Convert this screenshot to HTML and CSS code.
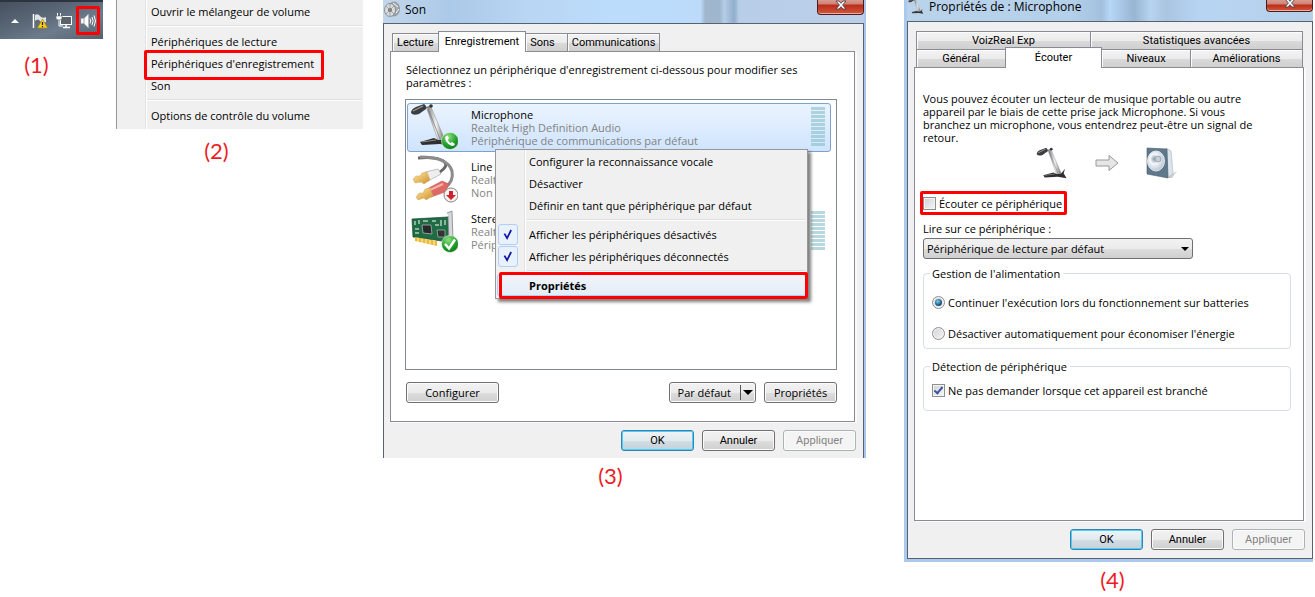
FILE: index.html
```html
<!DOCTYPE html>
<html lang="fr">
<head>
    <meta charset="UTF-8">
    <meta name="viewport" content="width=device-width, initial-scale=1.0">
    <title>Activer l'écoute du microphone</title>
    <link rel="stylesheet" href="styles.css">
</head>
<body>
    <!-- Symboles réutilisés -->
    <svg class="defs" width="0" height="0" aria-hidden="true">
        <defs>
            <linearGradient id="metal" x1="0" x2="1">
                <stop offset="0" stop-color="#777"/>
                <stop offset=".5" stop-color="#f4f4f4"/>
                <stop offset="1" stop-color="#666"/>
            </linearGradient>
            <linearGradient id="gold" x1="0" y1="0" x2="1" y2="1">
                <stop offset="0" stop-color="#f9e7a8"/>
                <stop offset=".5" stop-color="#e8bd62"/>
                <stop offset="1" stop-color="#c98d3c"/>
            </linearGradient>
            <radialGradient id="green" cx=".4" cy=".25" r=".8">
                <stop offset="0" stop-color="#8fe07f"/>
                <stop offset=".6" stop-color="#21a02c"/>
                <stop offset="1" stop-color="#0c7318"/>
            </radialGradient>
            <radialGradient id="cone" cx=".4" cy=".4" r=".7">
                <stop offset="0" stop-color="#8c9aa8"/>
                <stop offset=".35" stop-color="#f5f8fa"/>
                <stop offset="1" stop-color="#aebbc7"/>
            </radialGradient>
        </defs>
        <symbol id="mic" viewBox="0 0 44 44">
            <path d="M17 6 L21 4 L35 37 L28 37 Z" fill="url(#metal)" stroke="#888" stroke-width=".5"/>
            <path d="M19 8 L30 36" stroke="#666" stroke-width=".6"/>
            <path d="M22 3 L12 6" stroke="#777" stroke-width="1.800"/>
            <path d="M1 10 Q1 6 6 4 L14 1 Q17 3 16 6 L9 11 Q3 13 1 10 Z" fill="#3c3d40"/>
            <path d="M3 8 L13 3" stroke="#999" stroke-width="1.300"/>
            <circle cx="21" cy="3" r="1.800" fill="#333"/>
            <path d="M10 39 L24 35 L28 37 H34 L40 30 L38 36 L42 43 L30 41 L12 42 Z" fill="#2e2f31"/>
            <path d="M12 39 L26 37" stroke="#8a8a8a" stroke-width="1" fill="none"/>
        </symbol>
    </svg>

    <section class="step step-tray">
        <div class="tray">
            <svg class="tray-arrow" viewBox="0 0 8 4"><path d="M4 0 L8 4 H0 Z" fill="#fff"/></svg>
            <svg class="tray-icon" viewBox="0 0 16 16">
                <path d="M1.500 1 V15" stroke="#fff" stroke-width="1.500"/>
                <path d="M3 2 Q6 0 8 3 T14 4 V9 Q10 11 8 8 T3 8 Z" fill="#dfe3e6"/>
                <path d="M10.500 6 L15.500 15 H5.500 Z" fill="#f8d020" stroke="#b58a00" stroke-width=".7"/>
                <path d="M10.500 9 V12 M10.500 13 V14.200" stroke="#222" stroke-width="1.300"/>
            </svg>
            <svg class="tray-icon" viewBox="0 0 16 16">
                <rect x="4.500" y="3.500" width="11" height="8" fill="#59636c" stroke="#fff"/>
                <path d="M7 14.500 H14 M10 12 V14" stroke="#fff" stroke-width="1.500"/>
                <path d="M1.500 0 V3 M4.500 0 V3 M3 7 V13 H7" stroke="#fff" fill="none"/>
                <path d="M0 3 H6 V5 Q6 7 3 7 Q0 7 0 5 Z" fill="#fff" stroke="#444" stroke-width=".5"/>
            </svg>
            <button class="tray-volume marked" aria-label="Volume">
                <svg class="tray-icon" viewBox="0 0 16 16">
                    <path d="M1 5.500 H4 L8.500 1 V15 L4 10.500 H1 Z" fill="#fff" stroke="#aaa" stroke-width=".5"/>
                    <path d="M4 5.500 V10.500" stroke="#888" stroke-width=".8"/>
                    <path d="M10 5.500 Q11.500 8 10 10.500 M12 4 Q14.300 8 12 12 M14 2.500 Q17 8 14 13.500" stroke="#fff" fill="none"/>
                </svg>
            </button>
        </div>
        <p class="caption">(1)</p>
    </section>

    <section class="step step-menu">
        <div class="menu tray-menu">
            <button class="menu-item">Ouvrir le mélangeur de volume</button>
            <hr>
            <button class="menu-item">Périphériques de lecture</button>
            <button class="menu-item highlighted">Périphériques d'enregistrement</button>
            <button class="menu-item">Son</button>
            <hr>
            <button class="menu-item">Options de contrôle du volume</button>
        </div>
        <p class="caption">(2)</p>
    </section>

    <section class="step step-sound">
        <div class="window window-sound">
            <header class="title-bar">
                <svg class="title-icon" viewBox="0 0 16 16">
                    <ellipse cx="10" cy="8" rx="5.500" ry="7" fill="#a5a9ac" stroke="#777" stroke-width=".6"/>
                    <ellipse cx="6" cy="9" rx="5.500" ry="6.500" fill="#d9dcde" stroke="#777" stroke-width=".7"/>
                    <circle cx="6" cy="9" r="2" fill="#6d7174"/>
                    <path d="M2 5 L10 13 M10 5 L2 13 M6 3 V15" stroke="#8b8f92" stroke-width=".7"/>
                    <path d="M9 2 L14 6 M12 12 L15 8" stroke="#fff" stroke-width=".9"/>
                </svg>
                <h1>Son</h1>
                <button class="close" aria-label="Fermer">
                    <svg viewBox="0 0 12 10"><path d="M1 1 H4 L6 3.300 L8 1 H11 L7.600 5 L11 9 H8 L6 6.700 L4 9 H1 L4.400 5 Z" fill="#fff" stroke="#46444e" stroke-width=".9"/></svg>
                </button>
            </header>
            <div class="window-body">
                <nav class="tabs">
                    <button class="tab">Lecture</button>
                    <button class="tab active">Enregistrement</button>
                    <button class="tab tab-sons">Sons</button>
                    <button class="tab">Communications</button>
                </nav>
                <div class="panel">
                    <p class="intro">Sélectionnez un périphérique d'enregistrement ci-dessous pour modifier ses paramètres :</p>
                    <div class="device-box">
                        <ul class="devices">
                            <li class="device selected">
                                <svg class="device-icon" viewBox="0 0 50 48">
                                    <use href="#mic" x="2" y="0" width="44" height="44"/>
                                    <circle cx="42" cy="38" r="8.500" fill="url(#green)" stroke="#e8f5e8" stroke-width=".6"/>
                                    <path d="M38 33 Q36.500 34 37.500 37 Q40 42 44.500 43 Q46.500 43 47 41 L44 39 L42.500 40 Q40.500 39 39.800 36.500 L41 35.500 L39.500 32.500 Z" fill="#fff"/>
                                </svg>
                                <div class="device-text">
                                    <strong>Microphone</strong>
                                    <span>Realtek High Definition Audio</span>
                                    <span>Périphérique de communications par défaut</span>
                                </div>
                                <div class="meter"></div>
                            </li>
                            <li class="device">
                                <svg class="device-icon" viewBox="0 0 50 48">
                                    <path d="M10 3 Q36 1 38 10 Q37 14 29 19" fill="none" stroke="#666" stroke-width="3"/>
                                    <path d="M12 2 Q40 2 44 16 Q46 26 37 33" fill="none" stroke="#8c8c8c" stroke-width="3"/>
                                    <path d="M17 17 L30 14 L33 19 L20 26 Z" fill="#eee" stroke="#aaa" stroke-width=".7"/>
                                    <path d="M5 24 L8 21 H12 L14 18 L19 17 L22 25 L16 29 L13 27 L7 28 Z" fill="url(#gold)" stroke="#d0a860" stroke-width=".5"/>
                                    <path d="M19 34 L34 26 L41 29 L37 37 L23 42 Z" fill="#dd6a62" stroke="#c55" stroke-width=".6"/>
                                    <path d="M22 35 L35 29" stroke="#f3b4ae" stroke-width="2"/>
                                    <path d="M8 42 L11 38 H15 L17 34 L22 33 L25 41 L18 45 L16 43 L10 45 Z" fill="url(#gold)" stroke="#d0a860" stroke-width=".5"/>
                                    <circle cx="43" cy="40" r="7" fill="#f3f3f3" stroke="#858585"/>
                                    <path d="M41 36 H45 V40 H48 L43 45 L38 40 H41 Z" fill="#d3202a"/>
                                </svg>
                                <div class="device-text">
                                    <strong>Line</strong>
                                    <span>Realt</span>
                                    <span>Non</span>
                                </div>
                            </li>
                            <li class="device">
                                <svg class="device-icon" viewBox="0 0 50 48">
                                    <path d="M4 12 L40 10 L41 35 L5 30 Z" fill="#1f6b45" stroke="#134b30" stroke-width=".7"/>
                                    <path d="M39 6 L44 4 L45 33 L41 36 L40 9" fill="#d5d8da" stroke="#808589" stroke-width=".8"/>
                                    <path d="M7 30 L29 34 V39 L7 34 Z" fill="#e9b93d"/>
                                    <path d="M10 31 V35 M14 32 V36 M18 32 V37 M22 33 V38 M26 33 V38" stroke="#fff1b5"/>
                                    <path d="M14 18 L23 18 L24 27 L15 26 Z" fill="#26282b" stroke="#aab8ad" stroke-width=".8"/>
                                    <path d="M29 23 H37 V30 H30 Z" fill="#333" stroke="#9eb3a3" stroke-width=".8"/>
                                    <path d="M7 14 V18 M11 13 V17 M15 14 H20 M24 14 H28 M27 18 H31 M33 13 V19 M37 13 V18 M7 22 H11 M7 26 H11" stroke="#b5cdb9" stroke-width="1.500"/>
                                    <circle cx="42" cy="37" r="8.500" fill="url(#green)" stroke="#e8f5e8" stroke-width=".6"/>
                                    <path d="M37 37 L41 41.500 L47 32.500" fill="none" stroke="#fff" stroke-width="2.500"/>
                                </svg>
                                <div class="device-text">
                                    <strong>Stere</strong>
                                    <span>Realt</span>
                                    <span>Périp</span>
                                </div>
                                <div class="meter"></div>
                            </li>
                        </ul>
                        <div class="menu context-menu">
                            <button class="menu-item">Configurer la reconnaissance vocale</button>
                            <button class="menu-item">Désactiver</button>
                            <button class="menu-item">Définir en tant que périphérique par défaut</button>
                            <hr>
                            <button class="menu-item"><svg class="tick" viewBox="0 0 20 20"><path d="M6 9 L9 14 L13.500 5" fill="none" stroke="#1119a5" stroke-width="2"/></svg>Afficher les périphériques désactivés</button>
                            <button class="menu-item"><svg class="tick" viewBox="0 0 20 20"><path d="M6 9 L9 14 L13.500 5" fill="none" stroke="#1119a5" stroke-width="2"/></svg>Afficher les périphériques déconnectés</button>
                            <hr>
                            <button class="menu-item highlighted default">Propriétés</button>
                        </div>
                    </div>
                    <div class="panel-actions">
                        <button class="btn btn-wide">Configurer</button>
                        <button class="btn btn-split">Par défaut<span class="split"></span></button>
                        <button class="btn">Propriétés</button>
                    </div>
                </div>
                <div class="dialog-actions">
                    <button class="btn primary">OK</button>
                    <button class="btn">Annuler</button>
                    <button class="btn" disabled>Appliquer</button>
                </div>
            </div>
        </div>
        <p class="caption">(3)</p>
    </section>

    <section class="step step-properties">
        <div class="window window-properties">
            <header class="title-bar">
                <svg class="title-icon" viewBox="0 0 44 44"><use href="#mic"/></svg>
                <h1>Propriétés de : Microphone</h1>
                <button class="close" aria-label="Fermer">
                    <svg viewBox="0 0 12 10"><path d="M1 1 H4 L6 3.300 L8 1 H11 L7.600 5 L11 9 H8 L6 6.700 L4 9 H1 L4.400 5 Z" fill="#fff" stroke="#46444e" stroke-width=".9"/></svg>
                </button>
            </header>
            <div class="window-body">
                <nav class="tabs tabs-top">
                    <button class="tab">VoizReal Exp</button>
                    <button class="tab">Statistiques avancées</button>
                </nav>
                <nav class="tabs tabs-bottom">
                    <button class="tab">Général</button>
                    <button class="tab active">Écouter</button>
                    <button class="tab">Niveaux</button>
                    <button class="tab">Améliorations</button>
                </nav>
                <div class="panel">
                    <p class="intro">Vous pouvez écouter un lecteur de musique portable ou autre appareil par le biais de cette prise jack Microphone. Si vous branchez un microphone, vous entendrez peut-être un signal de retour.</p>
                    <div class="flow">
                        <svg class="flow-icon" viewBox="0 0 44 44"><use href="#mic"/></svg>
                        <svg class="flow-arrow" viewBox="0 0 24 18"><path d="M1 6 H14 V1.500 L23 9 L14 16.500 V12 H1 Z" fill="#e6e6e6" stroke="#999"/></svg>
                        <svg class="flow-icon" viewBox="0 0 32 32">
                            <path d="M20 31 L31 24 L26 31 Z" fill="#ccc"/>
                            <path d="M20 1 L25 4 L27 26 L22 31 Z" fill="#dce5ec" stroke="#a6b2bc" stroke-width=".6"/>
                            <path d="M1 1 L21 2 L22 31 L1 27 Z" fill="#60788c" stroke="#485c6d" stroke-width=".6"/>
                            <ellipse cx="10" cy="14" rx="8.500" ry="10" fill="url(#cone)" stroke="#dfe7ed"/>
                            <circle cx="12" cy="12" r="3" fill="#c3ced8" stroke="#7b8c9a" stroke-width=".6"/>
                        </svg>
                    </div>
                    <label class="choice listen marked"><input type="checkbox">Écouter ce périphérique</label>
                    <label class="field-label" for="playback">Lire sur ce périphérique :</label>
                    <div class="select">
                        <select id="playback">
                            <option>Périphérique de lecture par défaut</option>
                        </select>
                    </div>
                    <fieldset class="power">
                        <legend>Gestion de l'alimentation</legend>
                        <label class="choice"><input type="radio" name="power" checked>Continuer l'exécution lors du fonctionnement sur batteries</label>
                        <label class="choice"><input type="radio" name="power">Désactiver automatiquement pour économiser l'énergie</label>
                    </fieldset>
                    <fieldset class="detection">
                        <legend>Détection de périphérique</legend>
                        <label class="choice"><input type="checkbox" checked>Ne pas demander lorsque cet appareil est branché</label>
                    </fieldset>
                </div>
                <div class="dialog-actions">
                    <button class="btn primary">OK</button>
                    <button class="btn">Annuler</button>
                    <button class="btn" disabled>Appliquer</button>
                </div>
            </div>
        </div>
        <p class="caption">(4)</p>
    </section>
</body>
</html>
```
FILE: styles.css
```css
* {
    margin: 0;
    padding: 0;
    box-sizing: border-box;
}

body {
    display: flex;
    align-items: flex-start;
    padding-right: 2px;
    background-color: #fff;
    color: #000;
    font-family: 'Open Sans', 'Noto Sans', sans-serif;
    font-size: 11px;
    line-height: 13px;
}

button,
select {
    font: inherit;
    color: inherit;
}

.defs {
    position: absolute;
}

/* Étapes */
.step {
    min-width: 0;
}

.step-tray {
    flex: 103 1 0;
}

.step-menu {
    flex: 247 1 0;
    margin-left: 13px;
}

.step-sound {
    flex: 483 1 0;
    margin-left: 20px;
}

.step-properties {
    flex: 409 1 0;
    margin-left: 38px;
}

.caption {
    padding-top: 4px;
    color: #ed1c24;
    font-family: Lato, sans-serif;
    font-size: 22px;
    line-height: 28px;
    text-align: center;
}

.step-tray .caption {
    padding-top: 12px;
    padding-right: 30px;
}

.step-menu .caption {
    padding-top: 8px;
    padding-right: 46px;
}

.step-sound .caption {
    padding-right: 28px;
}

.step-properties .caption {
    padding-left: 8px;
}

.marked {
    border: 3px solid #f00;
    border-radius: 2px;
}

/* Zone de notification */
.tray {
    display: flex;
    align-items: center;
    justify-content: flex-end;
    gap: 8px;
    height: 39px;
    padding-right: 3px;
    border-top: 2px solid #2d3440;
    background: linear-gradient(160deg, #46505e 0%, #5d6b7b 45%, #6d7c8c 65%, #56616f 100%);
}

.tray-arrow {
    width: 8px;
    height: 4px;
    margin-right: 5px;
}

.tray-icon {
    display: block;
    width: 16px;
    height: 16px;
}

.tray-volume {
    display: flex;
    align-items: center;
    justify-content: center;
    width: 24px;
    height: 29px;
    margin-left: -4px;
    background: none;
}

/* Menus */
.menu {
    background: linear-gradient(90deg, #f0f0f0 28px, #e2e3e3 28px, #e2e3e3 29px, #fff 29px, #fff 30px, #f0f0f0 30px);
}

.menu hr {
    height: 2px;
    margin: 3px 1px 3px 30px;
    border: 0;
    border-top: 1px solid #e0e0e0;
    border-bottom: 1px solid #fff;
}

.menu-item {
    position: relative;
    display: block;
    width: 100%;
    height: 22px;
    padding-left: 34px;
    border: 0;
    background: none;
    text-align: left;
    white-space: nowrap;
}

.tray-menu {
    padding-bottom: 3px;
    border-left: 1px solid #979797;
}

.tray-menu .highlighted::after {
    content: "";
    position: absolute;
    top: -2px;
    bottom: -6px;
    left: 27px;
    width: 174px;
    border: 3px solid #f00;
    border-radius: 2px;
}

.context-menu {
    position: absolute;
    top: 49px;
    left: 89px;
    width: 313px;
    padding: 0 1px 2px;
    border: 1px solid #979797;
    box-shadow: 3px 3px 3px rgba(0, 0, 0, 0.5);
}

.context-menu hr {
    margin-bottom: 2px;
}

.context-menu .menu-item {
    padding-left: 32px;
}

.context-menu .default {
    border-radius: 3px;
    background: linear-gradient(#f2f5fa, #e3ecf8);
    box-shadow: inset 0 0 0 1px #aecff7;
    font-weight: bold;
}

.context-menu .highlighted::after {
    content: "";
    position: absolute;
    top: -2px;
    right: -2px;
    bottom: -3px;
    left: 2px;
    border: 3px solid #f00;
    border-radius: 2px;
}

.tick {
    position: absolute;
    top: 1px;
    left: 1px;
    width: 20px;
    height: 21px;
    border: 1px solid #aecff7;
    border-radius: 3px;
    background-color: #e9f1fb;
}

/* Fenêtres */
.window {
    background-color: #f0f0f0;
}

.title-bar {
    display: flex;
    align-items: flex-start;
    gap: 5px;
}

.title-bar h1 {
    font-size: 12px;
    font-weight: normal;
    line-height: 18px;
}

.title-icon {
    width: 16px;
    height: 16px;
}

.close {
    display: flex;
    justify-content: center;
    width: 47px;
    height: 15px;
    margin-left: auto;
    border: 1px solid #4a1c1c;
    border-top: 0;
    border-radius: 0 0 4px 4px;
    background: linear-gradient(#d99a8f 0, #cf8377 4px, #bb2d19 5px, #d1563d 100%);
    box-shadow: inset 0 -1px 0 #eeb0a2;
}

.close svg {
    width: 12px;
    height: 10px;
}

.window-sound {
    border-right: 2px solid #a9c7ea;
}

.window-sound .title-bar {
    height: 23px;
    padding: 1px 0 0 1px;
    background: linear-gradient(90deg, #c2d6ec 0%, #b5cfe9 8%, #abc9e8 14%, #b9d6f3 30%, #bcdcfc 48%, #bcdbfa 66%, #a0b6cc 67%, #9eb6cf 70%, #b5cde6 71%, #90adca 73%, #b8cee8 74%, #bccfe9 100%);
}

.window-sound .close {
    margin-top: -1px;
}

.window-sound .window-body {
    padding: 9px 8px 7px 6px;
    border: 1px solid #566270;
    border-bottom: 0;
}

.window-properties {
    padding-left: 3px;
    padding-bottom: 3px;
    background-color: #abc9ec;
}

.window-properties .title-bar {
    height: 21px;
    padding-left: 1px;
    background: linear-gradient(90deg, #b9d3ea 0%, #b4d0ea 40%, #a3c1de 48%, #b7d7f7 50%, #98b5d2 56%, #b6d3ef 60%, #a9c5e0 64%, #b7d5f3 72%, #b7cfe8 100%);
}

.window-properties .title-bar h1 {
    line-height: 14px;
}

.window-properties .close {
    height: 12px;
}

.window-properties .close svg {
    margin-top: -2px;
}

.window-properties .title-icon {
    margin-top: -2px;
}

.window-properties .window-body {
    padding: 9px 8px 8px 6px;
    border: 1px solid #566270;
    background-color: #f0f0f0;
}

/* Onglets */
.tabs {
    display: flex;
    align-items: flex-end;
    height: 18px;
    padding: 0 1px 0 2px;
}

.tab {
    height: 18px;
    padding: 0 4px;
    border: 1px solid #898c95;
    border-bottom: 0;
    background: linear-gradient(#f3f3f3 0%, #ebebeb 50%, #dadada 51%, #cfcfcf 100%);
    box-shadow: inset 1px 1px 0 #fcfcfc;
    font-family: Roboto, sans-serif;
    white-space: nowrap;
}

.tab + .tab {
    margin-left: -1px;
}

.tab.active {
    position: relative;
    height: 21px;
    margin-bottom: -1px;
    padding: 0 6px 2px;
    background: #fff;
}

.tab-sons {
    padding-right: 12px;
}

.tabs-top .tab {
    flex: 213 1 0;
}

.tabs-top .tab:first-child {
    flex-grow: 173;
}

.tabs-bottom .tab {
    flex: 89 1 0;
}

.tabs-bottom .tab.active {
    flex-grow: 93;
}

.tabs-bottom .tab:last-child {
    flex-grow: 115;
}

.panel {
    border: 1px solid #898c95;
    background-color: #fff;
    box-shadow: 2px 1px 0 #fbfbfb;
}

.window-sound .panel {
    padding: 11px 17px 18px 14px;
}

.window-properties .panel {
    min-height: 454px;
    padding: 24px 12px 0 8px;
}

.window-sound .intro {
    padding: 0 30px 10px 1px;
}

.window-properties .intro {
    padding-right: 20px;
}

/* Liste des périphériques */
.device-box {
    position: relative;
    min-height: 271px;
    padding: 3px 5px 3px 1px;
    border: 1px solid #828790;
}

.devices {
    list-style: none;
}

.device {
    display: flex;
    height: 49px;
    margin-bottom: 3px;
    padding: 4px 5px 0 4px;
    border: 1px solid transparent;
    border-radius: 3px;
}

.device.selected {
    border-color: #7da2ce;
    background: linear-gradient(#ebf4fe, #cfe4fe);
}

.device-icon {
    flex: none;
    width: 50px;
    height: 48px;
    margin: -5px 13px 0 -4px;
}

.device-text {
    flex: 1;
    color: #838383;
}

.device-text strong,
.device-text span {
    display: block;
    font-weight: normal;
    white-space: nowrap;
}

.device-text strong {
    color: #000;
}

.meter {
    width: 14px;
    height: 39px;
    margin-top: -1px;
    background: repeating-linear-gradient(rgba(135, 190, 200, 0.6) 0, rgba(135, 190, 200, 0.6) 3px, transparent 3px, transparent 4px);
}

/* Boutons */
.btn {
    width: 73px;
    height: 21px;
    border: 1px solid #707070;
    border-radius: 3px;
    background: linear-gradient(#f2f2f2 0%, #ebebeb 50%, #dddddd 51%, #cfcfcf 100%);
    box-shadow: inset 0 0 0 1px #fbfbfb;
    white-space: nowrap;
}

.btn.primary {
    border-color: #3c7fb1;
    background: linear-gradient(#eef3f6 0%, #e2eaef 50%, #d2dde4 51%, #c4d2db 100%);
    box-shadow: inset 0 0 0 1px #47d2f5;
}

.btn:disabled {
    border-color: #adb2b5;
    background: #f4f4f4;
    color: #838383;
}

.btn-wide {
    width: 93px;
    margin-right: auto;
}

.btn-split {
    display: flex;
    align-items: center;
    justify-content: flex-end;
    gap: 9px;
    width: 87px;
}

.split {
    height: 15px;
    padding: 5px 2px 0;
    border-left: 1px solid #555;
}

.split::before {
    content: "";
    display: block;
    border: 5px solid transparent;
    border-top-color: #000;
    border-bottom: 0;
}

.panel-actions,
.dialog-actions {
    display: flex;
    justify-content: flex-end;
    gap: 8px;
}

.panel-actions {
    padding: 12px 0 0 1px;
}

.dialog-actions {
    margin-right: -1px;
    padding-top: 8px;
}

.dialog-actions .btn {
    font-family: Roboto, sans-serif;
}

/* Propriétés du microphone */
.flow {
    display: flex;
    align-items: center;
    justify-content: center;
    gap: 27px;
    height: 32px;
    margin: 3px 0 12px;
}

.flow-icon {
    width: 32px;
    height: 32px;
}

.flow-arrow {
    width: 24px;
    height: 18px;
}

.choice {
    display: flex;
    align-items: center;
    gap: 3px;
    white-space: nowrap;
}

.listen {
    width: fit-content;
    height: 24px;
    margin: 0 0 7px -3px;
    padding-right: 2px;
}

.choice input {
    display: flex;
    align-items: center;
    justify-content: center;
    flex: none;
    appearance: none;
    width: 13px;
    height: 13px;
    border: 1px solid #8e8f8f;
    background: linear-gradient(135deg, #cfd2d6, #f6f6f6);
    box-shadow: inset 0 0 0 1px #f4f4f4;
}

.choice input[type="radio"] {
    border-radius: 50%;
}

.choice input[type="radio"]:checked::before {
    content: "";
    width: 7px;
    height: 7px;
    border-radius: 50%;
    background: radial-gradient(circle at 40% 35%, #7fd0f0, #15567f 60%, #0b2f4a);
}

.choice input[type="checkbox"]:checked::before {
    content: "";
    width: 3px;
    height: 7px;
    margin-bottom: 2px;
    border: solid #4154a0;
    border-width: 0 2px 2px 0;
    transform: rotate(40deg);
}

.field-label {
    display: block;
}

.select {
    position: relative;
    width: 270px;
    margin: 3px 0 8px;
}

.select::after {
    content: "";
    position: absolute;
    top: 9px;
    right: 4px;
    border: 4px solid transparent;
    border-top-color: #000;
    border-bottom: 0;
    pointer-events: none;
}

.select select {
    display: block;
    appearance: none;
    width: 100%;
    height: 21px;
    padding: 0 3px;
    border: 1px solid #707070;
    border-radius: 3px;
    background: linear-gradient(#f2f2f2 0%, #ebebeb 50%, #dddddd 51%, #cfcfcf 100%);
}

fieldset {
    border: 1px solid #d5dfe5;
    border-radius: 4px;
}

legend {
    margin-left: -2px;
    padding: 0 3px 0 2px;
}

.power {
    height: 82px;
    margin-bottom: 11px;
    padding: 16px 8px 0;
}

.power .choice + .choice {
    margin-top: 18px;
}

.detection {
    height: 51px;
    padding: 11px 8px 0;
}
```
